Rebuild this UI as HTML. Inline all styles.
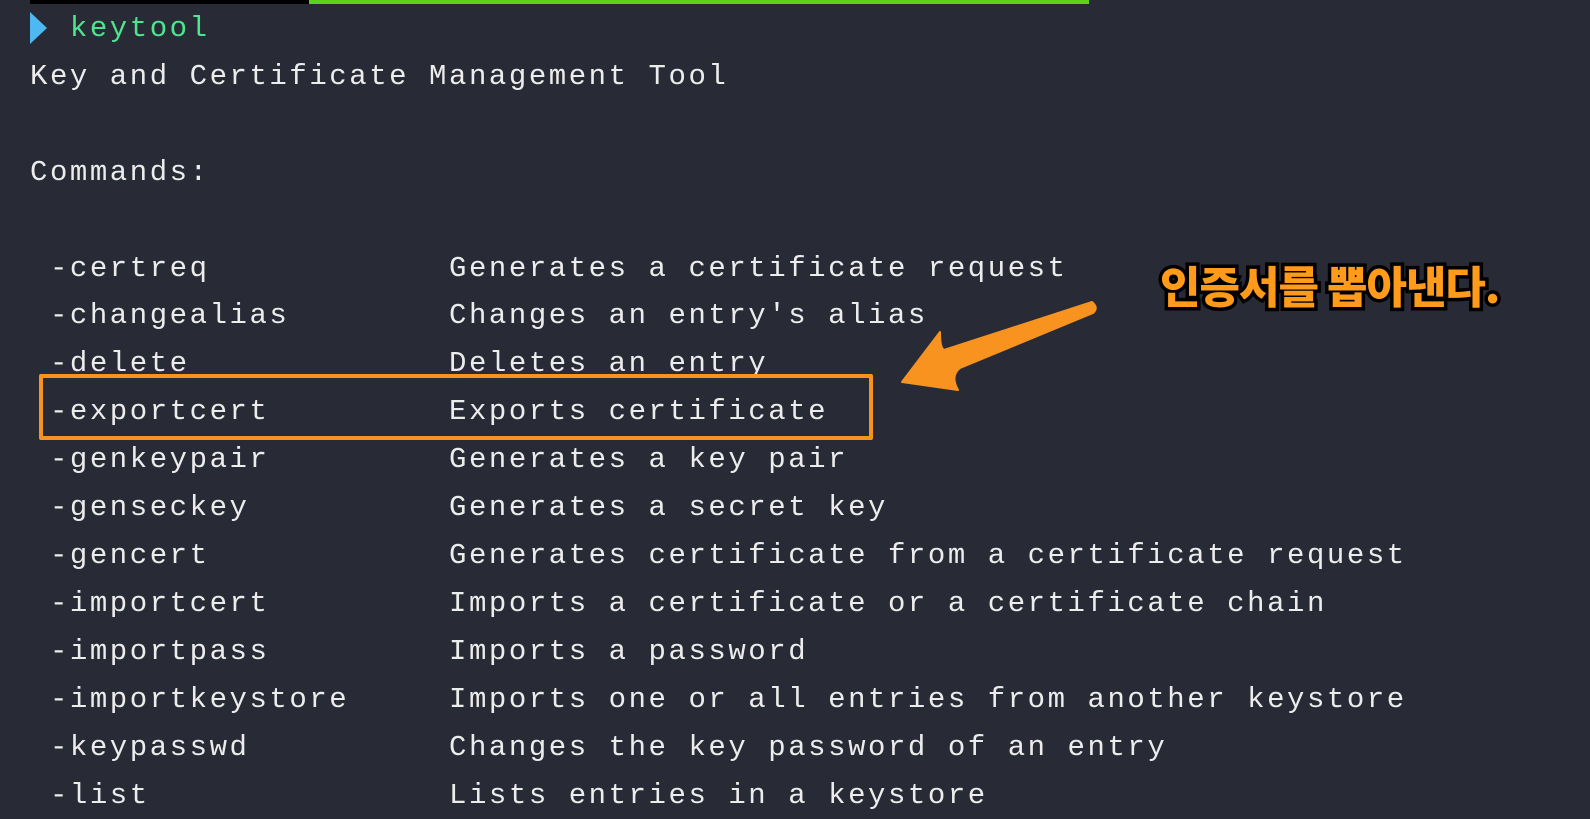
<!DOCTYPE html>
<html><head><meta charset="utf-8"><style>
html,body{margin:0;padding:0;}
body{width:1590px;height:816px;background:#282a36;overflow:hidden;position:relative;}
.bar1{position:absolute;left:30px;top:0;width:279px;height:4px;background:#000;}
.bar2{position:absolute;left:309px;top:0;width:780px;height:4px;background:#5fd01c;}
pre{position:absolute;left:30px;top:5px;margin:0;font-family:"Liberation Mono",monospace;font-size:29px;letter-spacing:2.55px;line-height:47.9px;color:#ececec;}
.g{color:#4ee58e;}
.tri{position:absolute;left:30px;top:12px;width:0;height:0;border-top:16px solid transparent;border-bottom:16px solid transparent;border-left:17px solid #4db8f2;}
.box{position:absolute;left:39px;top:374px;width:826px;height:58px;border:4px solid #f7931e;border-radius:2px;}
.ko{position:absolute;left:1160px;top:252px;font-family:"Noto Sans CJK KR",sans-serif;font-weight:900;font-size:44px;color:#ff9a1a;-webkit-text-stroke:7px #000;paint-order:stroke fill;letter-spacing:-1px;}
svg{position:absolute;left:0;top:0;}
</style></head><body>
<div class="bar1"></div><div class="bar2"></div>
<div class="tri"></div>
<pre>  <span class="g">keytool</span>
Key and Certificate Management Tool

Commands:

 -certreq            Generates a certificate request
 -changealias        Changes an entry's alias
 -delete             Deletes an entry
 -exportcert         Exports certificate
 -genkeypair         Generates a key pair
 -genseckey          Generates a secret key
 -gencert            Generates certificate from a certificate request
 -importcert         Imports a certificate or a certificate chain
 -importpass         Imports a password
 -importkeystore     Imports one or all entries from another keystore
 -keypasswd          Changes the key password of an entry
 -list               Lists entries in a keystore</pre>
<div class="box"></div>
<div class="ko">인증서를 뽑아낸다.</div>
<svg width="1590" height="816"><path d="M1092 302 Q1099 308 1093 313 L960 368 Q950 376 958 390 L902 382 L940 332 Q940 348 944 350 Z" fill="#f7931e" stroke="#f7931e" stroke-width="2" stroke-linejoin="round"/></svg>
</body></html>
